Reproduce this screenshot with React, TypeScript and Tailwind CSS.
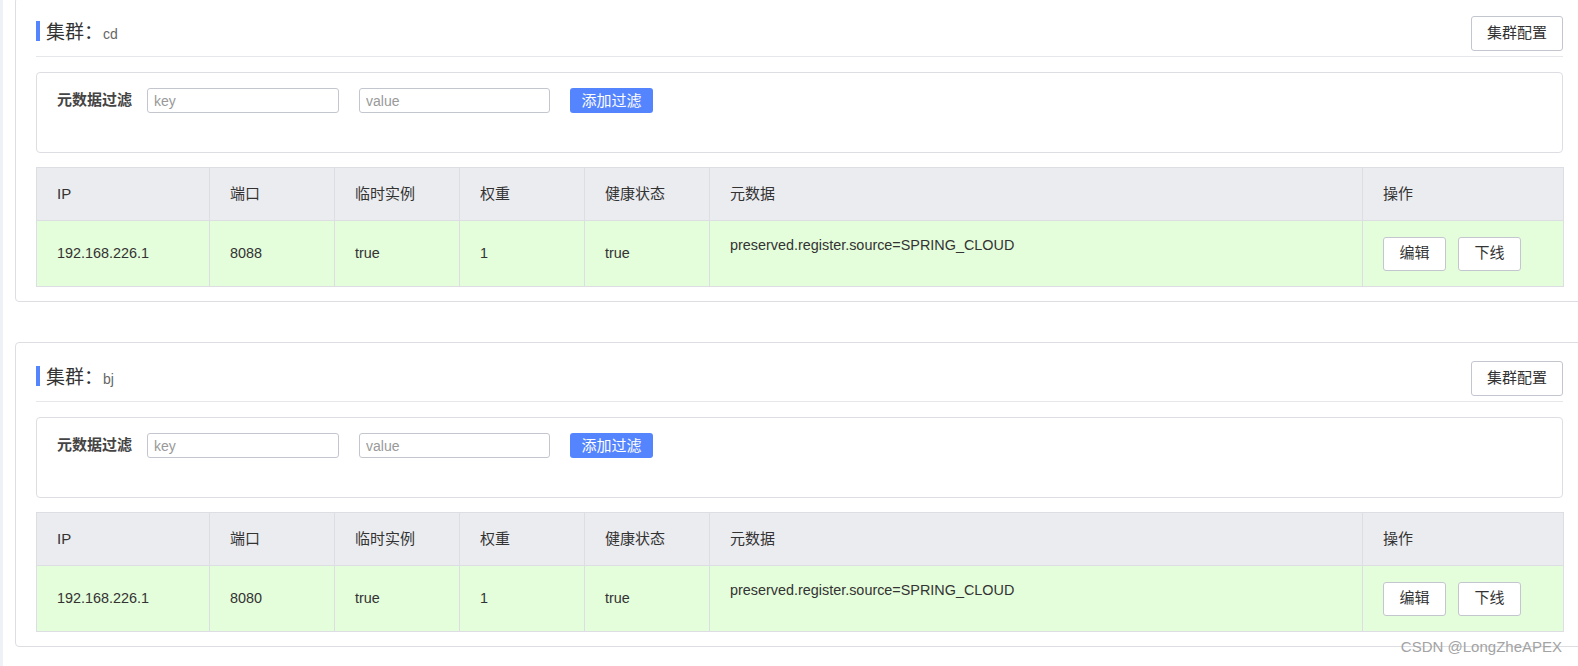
import React from "react";

type Instance = {
  ip: string;
  port: string;
  ephemeral: string;
  weight: string;
  healthy: string;
  metadata: string;
};

type Cluster = {
  name: string;
  instances: Instance[];
};

const clusters: Cluster[] = [
  {
    name: "cd",
    instances: [
      {
        ip: "192.168.226.1",
        port: "8088",
        ephemeral: "true",
        weight: "1",
        healthy: "true",
        metadata: "preserved.register.source=SPRING_CLOUD",
      },
    ],
  },
  {
    name: "bj",
    instances: [
      {
        ip: "192.168.226.1",
        port: "8080",
        ephemeral: "true",
        weight: "1",
        healthy: "true",
        metadata: "preserved.register.source=SPRING_CLOUD",
      },
    ],
  },
];

// column widths taken from the screenshot
const columns = [
  { title: "IP", width: "w-[173px]" },
  { title: "端口", width: "w-[125px]" },
  { title: "临时实例", width: "w-[125px]" },
  { title: "权重", width: "w-[125px]" },
  { title: "健康状态", width: "w-[125px]" },
  { title: "元数据", width: "w-[653px]" },
  { title: "操作", width: "w-[201px]" },
];

const ClusterCard = ({ cluster, first }: { cluster: Cluster; first?: boolean }) => {
  return (
    <div
      className={`w-[1569px] border border-[#dcdee3] rounded-[4px] px-[20px] pt-[18px] pb-[14px] bg-white ${
        first ? "-mt-[3px]" : "mt-[40px]"
      }`}
    >
      {/* title */}
      <div className="flex justify-between items-start h-[35px]">
        <div className="flex items-start mt-[5px]">
          <span className="w-[4px] h-[20px] bg-[#5584ff]" />
          <div className="flex items-baseline ml-[6px] leading-[24px]">
            <span className="text-[19px] text-[#333]">集群：</span>
            <span className="text-[14px] text-[#666]">{cluster.name}</span>
          </div>
        </div>
        <button
          type="button"
          className="w-[92px] h-[35px] border border-[#c4c6cf] rounded-[3px] bg-white text-[15px] text-[#333]"
        >
          集群配置
        </button>
      </div>
      <div className="mt-[5px] h-px bg-[#e6e7eb]" />

      {/* metadata filter */}
      <div className="mt-[15px] h-[81px] border border-[#dcdee3] rounded-[4px] px-[20px] pt-[15px]">
        <div className="flex items-center h-[25px]">
          <label className="w-[90px] text-[15px] font-bold text-[#444]">元数据过滤</label>
          <input
            placeholder="key"
            className="w-[192px] h-[25px] border border-[#c4c6cf] rounded-[3px] px-[6px] text-[14px] text-[#333] placeholder:text-[#999] outline-none"
          />
          <input
            placeholder="value"
            className="ml-[20px] w-[191px] h-[25px] border border-[#c4c6cf] rounded-[3px] px-[6px] text-[14px] text-[#333] placeholder:text-[#999] outline-none"
          />
          <button
            type="button"
            className="ml-[20px] w-[83px] h-[25px] rounded-[3px] bg-[#5584ff] text-white text-[15px] leading-[25px]"
          >
            添加过滤
          </button>
        </div>
      </div>

      {/* instances */}
      <table className="mt-[14px] w-[1527px] table-fixed border-collapse border border-[#dcdee3]">
        <thead>
          <tr className="bg-[#ebecf0]">
            {columns.map((c) => (
              <th
                key={c.title}
                className={`${c.width} h-[53px] border border-[#dcdee3] pl-[20px] text-left font-normal text-[15px] text-[#333]`}
              >
                {c.title}
              </th>
            ))}
          </tr>
        </thead>
        <tbody>
          {cluster.instances.map((ins) => (
            <tr key={ins.ip + ins.port} className="bg-[#e4fdda] text-[14.4px] text-[#333]">
              <td className="h-[66px] border border-[#dcdee3] pl-[20px]">{ins.ip}</td>
              <td className="border border-[#dcdee3] pl-[20px]">{ins.port}</td>
              <td className="border border-[#dcdee3] pl-[20px]">{ins.ephemeral}</td>
              <td className="border border-[#dcdee3] pl-[20px]">{ins.weight}</td>
              <td className="border border-[#dcdee3] pl-[20px]">{ins.healthy}</td>
              <td className="border border-[#dcdee3] pl-[20px] pt-[14px] align-top">{ins.metadata}</td>
              <td className="border border-[#dcdee3] pl-[20px]">
                <div className="flex gap-[12px]">
                  <button
                    type="button"
                    className="w-[63px] h-[34px] border border-[#c4c6cf] rounded-[3px] bg-white text-[15px] text-[#333]"
                  >
                    编辑
                  </button>
                  <button
                    type="button"
                    className="w-[63px] h-[34px] border border-[#c4c6cf] rounded-[3px] bg-white text-[15px] text-[#333]"
                  >
                    下线
                  </button>
                </div>
              </td>
            </tr>
          ))}
        </tbody>
      </table>
    </div>
  );
};

const App = () => {
  return (
    <div className="relative w-[1578px] h-[666px] overflow-hidden bg-white font-['Liberation_Sans','Noto_Sans_CJK_SC',sans-serif]">
      <div className="flex h-full">
        <div className="w-[3px] h-full bg-[#eef1f5] shrink-0" />
        <div className="pl-[12px] shrink-0">
          {clusters.map((c, i) => (
            <ClusterCard key={c.name} cluster={c} first={i === 0} />
          ))}
        </div>
      </div>
      <div className="absolute right-[16px] top-[637px] text-[15px] leading-[20px] text-[#a3a3a3]">
        CSDN @LongZheAPEX
      </div>
    </div>
  );
};

export default App;
